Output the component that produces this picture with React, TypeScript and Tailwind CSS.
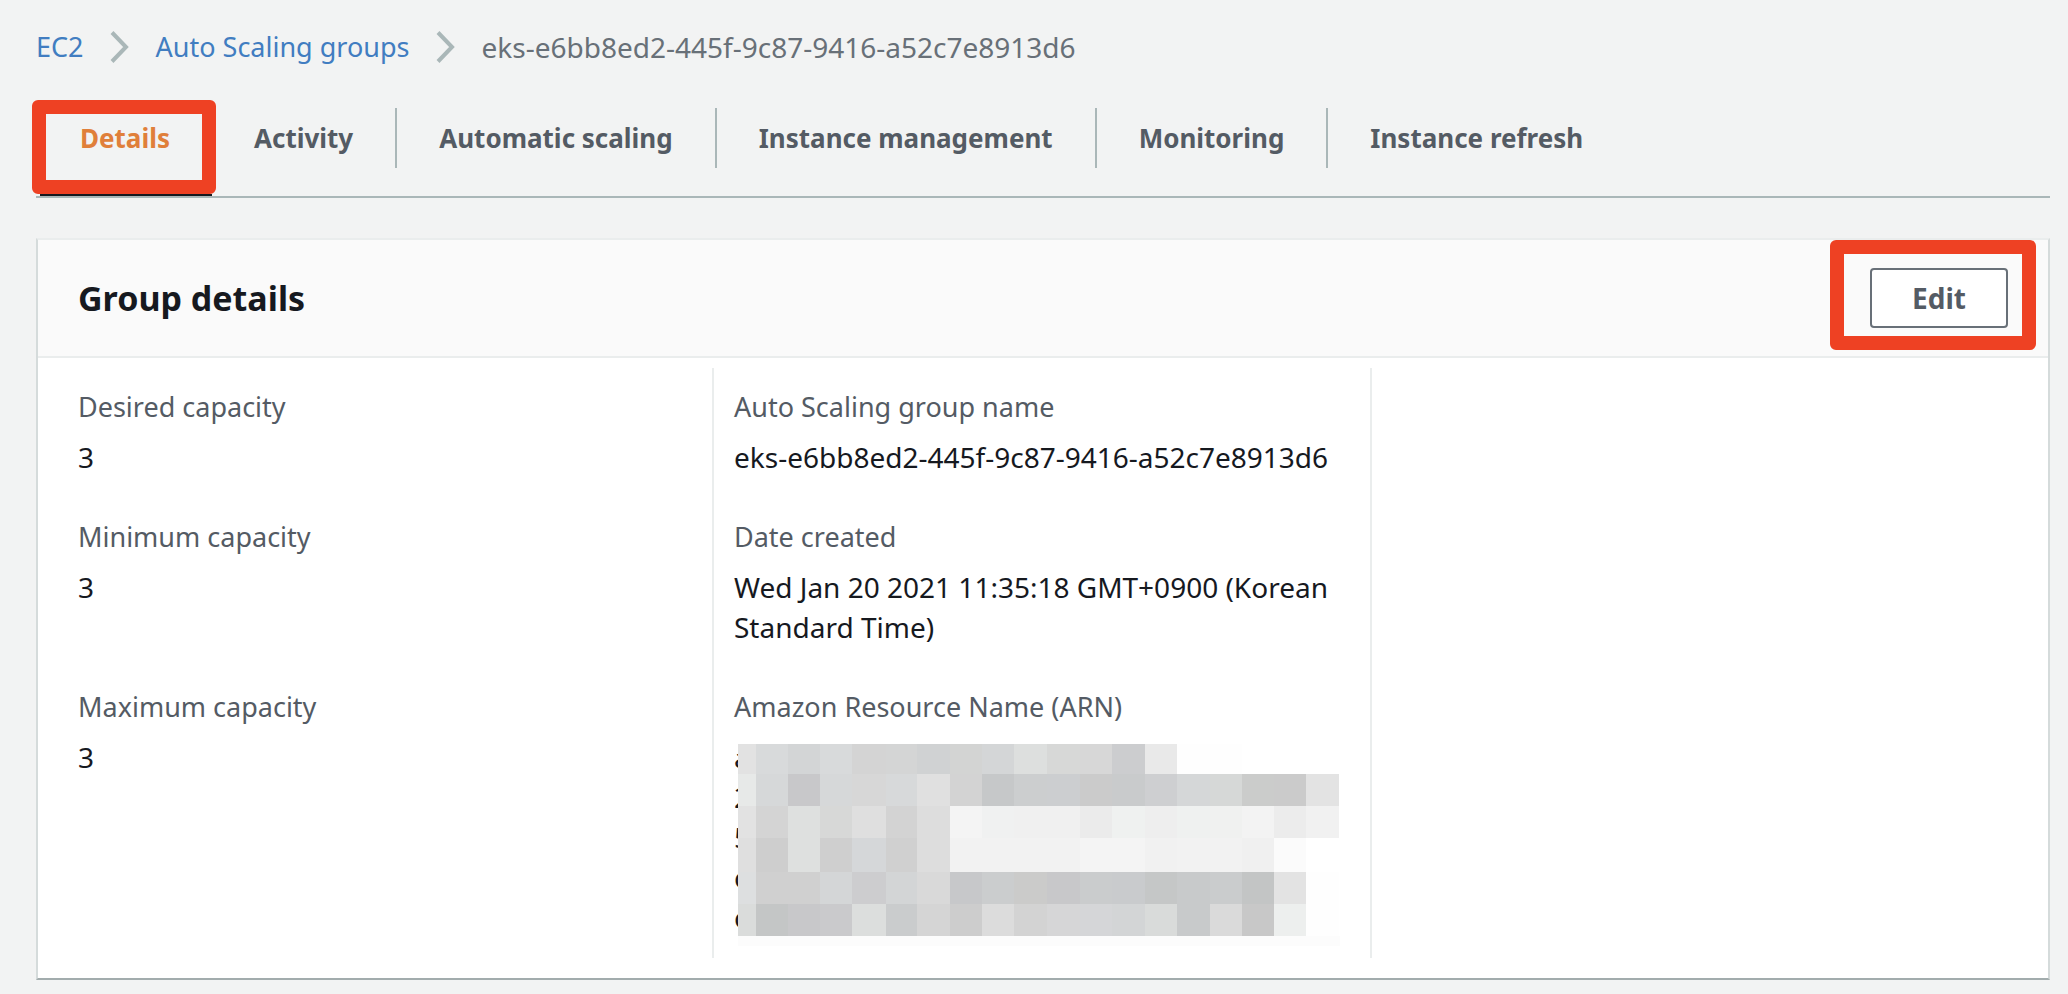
import React from "react";

const groupName = "eks-e6bb8ed2-445f-9c87-9416-a52c7e8913d6";

const tabs = [
  "Details",
  "Activity",
  "Automatic scaling",
  "Instance management",
  "Monitoring",
  "Instance refresh",
];

const xs = [0, 18, 50, 82, 114, 148, 179, 212, 244, 276, 309, 342, 374, 407, 439, 472, 504, 536, 568, 601];
const ys = [0, 30, 62, 94, 128, 160, 192];

const mosaic = [
  "e2e2e2 d8dadb d3d5d6 d8dadb d4d4d4 d4d5d5 d0d2d3 d3d4d3 d4d6d7 dddfde d7d8d7 d7d7d7 cccdcf e9e9e9 fefefe fefefe ffffff ffffff ffffff",
  "e7e9e8 d6d8d9 c8c8ca d6d8d9 d7d7d7 d7d9da e0e0e0 d3d3d3 c6c8c9 cccecf ccced0 cbcbcb c9cbcc cecfd1 d5d7d8 d6d8d7 cbcccb cbcbcb e3e3e3",
  "e2e2e2 d4d4d4 dee0df d7d8d7 dfdfdf d3d3d3 dddddd f4f4f4 f0f1f1 f0f0f0 f0f0f0 ebebeb eff1f0 eeeeee eff1f0 f0f1f0 f3f3f3 ececec f1f1f1",
  "dfdfdf cecece dee0df cfcfcf d5d7d9 d0d0d0 dddddd f2f2f2 f2f2f2 f2f2f2 f2f2f2 f4f4f4 f4f4f4 f1f1f1 f2f2f2 f2f2f2 f0f0f0 fbfbfb ffffff",
  "dddfe0 d0d0d0 d0d0d0 d4d6d7 cdcdcf d3d5d6 d9d9d9 c7c8ca cbcdce cbcbca c8c8ca cacccd c9cbcd c5c7c7 c8cacb cacccd c3c5c5 e3e3e3 fefefe",
  "dadcdb c4c6c6 c8c8ca cacacc dcdedd cacccd d5d5d5 cdcdcd dcdcdc d3d3d3 d6d6d7 d5d6d8 d3d5d6 d9dbda c8cacb dadada c8c8c8 edefee fefefe",
].map((row) => row.split(" "));

function Mosaic() {
  return (
    <svg
      className="absolute top-[7px] left-1 h-[202px] w-[602px]"
      viewBox="0 0 602 202"
      shapeRendering="crispEdges"
      aria-hidden="true"
    >
      {mosaic.map((row, r) =>
        row.map((c, i) => (
          <rect key={`${r}-${i}`} x={xs[i]} y={ys[r]} width={xs[i + 1] - xs[i]} height={ys[r + 1] - ys[r]} fill={`#${c}`} />
        )),
      )}
      <rect x="0" y="192" width="602" height="10" fill="#fcfcfc" />
    </svg>
  );
}

function Chevron() {
  return (
    <svg className="h-8 w-5 shrink-0" viewBox="0 0 20 32" fill="none" stroke="#aab7b8" strokeWidth="4" aria-hidden="true">
      <path d="M2 1.5 L16 16 L2 30.5" />
    </svg>
  );
}

function Field({ label, children }: { label: string; children: React.ReactNode }) {
  return (
    <div className="flex flex-col gap-[10px]">
      <dt className="text-[27px] leading-10 text-[#545b64]">{label}</dt>
      <dd className="relative text-[#16191f]">{children}</dd>
    </div>
  );
}

export default function App() {
  return (
    <div className="min-h-screen bg-[#f2f3f3] pr-[18px] pb-3 pl-9 font-['Noto_Sans',sans-serif] text-[28px] leading-10">
      <nav aria-label="Breadcrumb" className="pt-[27px]">
        <ol className="flex items-center gap-[26px]">
          <li>
            <a href="#ec2" className="block text-[27px] leading-10 text-[#417dc1]">EC2</a>
          </li>
          <li className="flex items-center gap-[26px]">
            <Chevron />
            <a href="#groups" className="block text-[27px] leading-10 text-[#417dc1]">Auto Scaling groups</a>
          </li>
          <li className="flex items-center gap-[26px]">
            <Chevron />
            <span className="text-[#687078]">{groupName}</span>
          </li>
        </ol>
      </nav>

      <div role="tablist" className="mt-[33px] flex h-[98px] items-start border-b-2 border-[#aab7b8] pt-2 text-[26px] font-bold text-[#545b64]">
        {tabs.map((t, i) =>
          i === 0 ? (
            <div key={t} className="relative ml-1 flex h-[88px] w-[172px] items-start border-b-2 border-[#16191f]">
              <button role="tab" aria-selected="true" className="h-15 px-10 text-[#e07f3a]">{t}</button>
              <span className="pointer-events-none absolute -top-2 -right-1 -left-2 h-[94px] rounded-md border-14 border-[#ee4123]" />
            </div>
          ) : (
            <button key={t} role="tab" aria-selected="false" className="h-15 border-r-2 border-[#aab7b8] px-[42px] last:border-r-0">{t}</button>
          ),
        )}
      </div>

      <section className="mt-10 border-2 border-x-[#d5dbdb] border-t-[#eaeded] border-b-[#a2acad] bg-white">
        <header className="flex h-[118px] items-center justify-between border-b-2 border-[#eaeded] bg-[#fafafa] px-10">
          <h2 className="text-[34px] font-bold text-[#16191f]">Group details</h2>
          <div className="relative">
            <button className="h-15 w-[138px] rounded-sm border-2 border-[#687078] bg-white text-[28px] font-bold text-[#545b64]">Edit</button>
            <span className="pointer-events-none absolute -top-7 -right-7 -bottom-[22px] -left-10 rounded-md border-14 border-[#ee4123]" />
          </div>
        </header>
        <dl className="grid grid-cols-3 pt-[10px] pr-5 pb-5 pl-4">
          <div className="grid grid-rows-[90px_130px_auto] gap-y-10 pt-[19px] pb-[21px] pl-6">
            <Field label="Desired capacity">3</Field>
            <Field label="Minimum capacity">3</Field>
            <Field label="Maximum capacity">3</Field>
          </div>
          <div className="grid grid-rows-[90px_130px_auto] gap-y-10 border-l-2 border-[#eaeded] px-5 pt-[19px] pb-[21px]">
            <Field label="Auto Scaling group name">{groupName}</Field>
            <Field label="Date created">Wed Jan 20 2021 11:35:18 GMT+0900 (Korean Standard Time)</Field>
            <Field label="Amazon Resource Name (ARN)">
              {["a", "2", "5", "c", "c"].map((c, i) => (
                <span key={i} className="block">{c}</span>
              ))}
              <Mosaic />
            </Field>
          </div>
          <div className="border-l-2 border-[#eaeded]" />
        </dl>
      </section>
    </div>
  );
}
